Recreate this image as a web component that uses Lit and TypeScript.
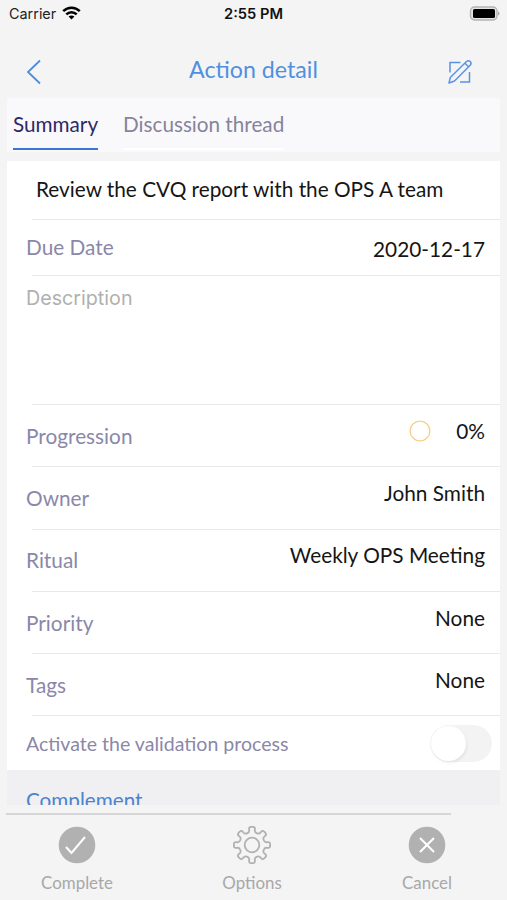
import { LitElement, html, css, svg, nothing } from "lit";
import { customElement, property } from "lit/decorators.js";

@customElement("status-bar")
class StatusBar extends LitElement {
  static styles = css`
    :host { display: grid; grid-template-columns: 1fr auto 1fr; align-items: center; height: 28px; padding: 0 7px 0 9px; box-sizing: border-box; font: 14.4px/28px Inter, sans-serif; color: #222; }
    .left { display: flex; align-items: center; gap: 6px; }
    .left svg { margin-top: -2px; }
    .time { font-weight: 600; color: #111; font-size: 14.7px; margin-left: -2px; }
    .battery { justify-self: end; margin-top: -2px; }
    svg { display: block; }
  `;
  render() {
    return html`
      <div class="left"><span>Carrier</span>
        <svg width="19" height="14" viewBox="0 0 19 14"><g fill="none" stroke="#000" stroke-width="2.5"><path d="M1.2 5.2C6 .5 13 .5 17.8 5.2"/><path d="M4.3 8.4c3-3 7.400-3 10.400 0"/></g><path fill="#000" d="M6.600 10.600c1.700-1.500 4.100-1.500 5.800 0L9.500 13.600z"/></svg>
      </div>
      <span class="time">2:55 PM</span>
      <svg class="battery" width="31" height="15" viewBox="0 0 31 15"><rect x="1.500" y="1" width="26.500" height="13" rx="4" fill="#e4e4e4" stroke="#b4b4b4" stroke-width="1.400"/><rect x="4" y="3" width="22" height="9" rx="1.500" fill="#000"/><path d="M29 5.500c2 .8 2 3.200 0 4z" fill="#aaa"/></svg>`;
  }
}

@customElement("detail-row")
class DetailRow extends LitElement {
  @property() label = "";
  @property() value = "";
  @property({ type: Boolean }) ring = false;
  static styles = css`
    :host { display: flex; justify-content: space-between; box-sizing: border-box; height: 61.300px; padding: 0 15px 0 19px; font-size: 20.800px; line-height: 26px; }
    .label { color: #8a88a8; padding-top: 17.700px; }
    .value { color: #151515; padding-top: 12.700px; display: flex; align-items: center; height: 26px; gap: 25px; }
  `;
  render() {
    return html`<span class="label">${this.label}</span>
      <span class="value">${this.ring ? html`<svg width="22" height="22" viewBox="0 0 22 22"><circle cx="11" cy="11" r="9.900" fill="none" stroke="#f9cc8b" stroke-width="1.300"/></svg>` : nothing}<span>${this.value}</span></span>`;
  }
}

@customElement("app-root")
class AppRoot extends LitElement {
  static styles = css`
    :host { display: flex; flex-direction: column; width: 507px; height: 900px; overflow: hidden; background: #f4f4f4; font-family: Lato, sans-serif; }
    svg { display: block; }
    .nav { display: grid; grid-template-columns: 48px 1fr 48px; align-items: center; height: 70px; box-sizing: border-box; padding: 17px 23px 0 10px; }
    .nav svg { justify-self: center; }
    .title { text-align: center; font-size: 23.200px; line-height: 30px; color: #5090e0; padding-bottom: 6px; padding-left: 13px; }
    .tabs { display: flex; gap: 25px; height: 54px; margin: 0 7px; padding: 0 6px; background: #f9f9fb; box-sizing: border-box; font-size: 20.700px; line-height: 53px; color: #85849a; }
    .tab { height: 52px; box-sizing: border-box; border-bottom: 2px solid #fff; }
    .active { color: #2f2865; border-color: #3d73d5; }
    .card { margin: 9px 7px 0; background: #fff; height: 609px; flex: none; overflow: hidden; }
    .line { margin-left: 25px; height: 1px; background: #e9e9eb; }
    .task { padding-left: 29px; height: 58px; line-height: 56px; font-size: 20.780px; color: #151515; }
    .date { display: flex; justify-content: space-between; height: 55px; padding: 0 15px 0 19px; font-size: 20.800px; line-height: 53px; color: #8a88a8; }
    .date b { font-weight: 400; color: #151515; padding-top: 2px; }
    .desc { height: 128px; box-sizing: border-box; padding: 8px 19px; font: 19.700px/28px Inter, sans-serif; color: #b0b0b0; }
    .validation { display: flex; align-items: center; justify-content: space-between; height: 55px; padding: 0 8px 0 19px; font-size: 19.560px; color: #8a88a8; }
    .toggle { width: 62px; height: 37px; border-radius: 19px; background: #f3f3f4; padding: 1px; box-sizing: border-box; }
    .knob { width: 35px; height: 35px; border-radius: 50%; background: #fff; box-shadow: 1px 2px 3px #0001; }
    .complement { margin: 0 7px; height: 35px; flex: none; background: #f0f0f2; overflow: hidden; padding: 17px 0 0 19px; box-sizing: border-box; font-size: 20.700px; line-height: 26px; color: #4c83cf; }
    .rule { width: 445px; height: 2px; margin: 8px 0 0 6px; background: #d6d6d6; flex: none; }
    .actions { display: flex; justify-content: space-between; padding: 11px 17.500px 0 14.500px; font-size: 16.900px; line-height: 24px; color: #a8a8a8; }
    .action { width: 125px; display: flex; flex-direction: column; align-items: center; gap: 7px; }
  `;
  gear() {
    const pts: number[][] = [];
    for (let i = 0; i < 8; i++) {
      for (const [a, r] of [[-10, 18.4], [10, 18.4], [11, 13], [34, 13]]) {
        const t = ((i * 45 + a) * Math.PI) / 180;
        pts.push([19 + r * Math.sin(t), 19 - r * Math.cos(t)]);
      }
    }
    const at = (p: number[], q: number[], k: number) =>
      `${(p[0] + (q[0] - p[0]) * k).toFixed(2)} ${(p[1] + (q[1] - p[1]) * k).toFixed(2)}`;
    const d = pts.map((p, i) => {
      const prev = pts[(i + pts.length - 1) % pts.length];
      const next = pts[(i + 1) % pts.length];
      return `${i ? "L" : "M"}${at(p, prev, 0.42)}Q${at(p, p, 0)} ${at(p, next, 0.42)}`;
    });
    return svg`<path d=${d.join("") + "Z"}/>`;
  }
  render() {
    const rows = [["Progression", "0%"], ["Owner", "John Smith"], ["Ritual", "Weekly OPS Meeting"], ["Priority", "None"], ["Tags", "None"]];
    return html`
      <status-bar></status-bar>
      <header class="nav">
        <svg width="16" height="26" viewBox="0 0 16 26"><path d="M14 1.500 2 13l12 11.500" fill="none" stroke="#4b8be0" stroke-width="1.800"/></svg>
        <span class="title">Action detail</span>
        <svg width="26" height="26" viewBox="0 0 26 26" fill="none" stroke="#5b93e3" stroke-width="1.500"><path d="M3 13.500V3.500H13.500M22.500 13v10H13"/><path d="m2 24 1.300-5.500L19.500 2.500q2-1.500 3.700 0t0 3.700L7.500 22zM18 4.200l3.500 3.500" stroke-linejoin="round"/></svg>
      </header>
      <nav class="tabs"><span class="tab active">Summary</span><span class="tab">Discussion thread</span></nav>
      <main class="card">
        <div class="task">Review the CVQ report with the OPS A team</div>
        <div class="line"></div>
        <div class="date"><span>Due Date</span><b>2020-12-17</b></div>
        <div class="line"></div>
        <div class="desc">Description</div>
        ${rows.map(([l, v], i) => html`<div class="line"></div><detail-row label=${l} value=${v} ?ring=${i === 0}></detail-row>`)}
        <div class="line"></div>
        <div class="validation"><span>Activate the validation process</span><div class="toggle"><div class="knob"></div></div></div>
      </main>
      <section class="complement">Complement</section>
      <div class="rule"></div>
      <footer class="actions">
        <div class="action"><svg width="38" height="38" viewBox="0 0 38 38"><circle cx="19" cy="19" r="18.300" fill="#b1b1b1"/><path d="m8 21 5.500 6L27 11" fill="none" stroke="#fff" stroke-width="2"/></svg>Complete</div>
        <div class="action"><svg width="38" height="38" viewBox="0 0 38 38" fill="none" stroke="#b1b1b1" stroke-width="1.800" stroke-linejoin="round">${this.gear()}<circle cx="19" cy="19" r="7.300"/></svg>Options</div>
        <div class="action"><svg width="38" height="38" viewBox="0 0 38 38"><circle cx="19" cy="19" r="18.300" fill="#b1b1b1"/><path d="m12 12 14 14M26 12 12 26" stroke="#fff" stroke-width="2"/></svg>Cancel</div>
      </footer>`;
  }
}
